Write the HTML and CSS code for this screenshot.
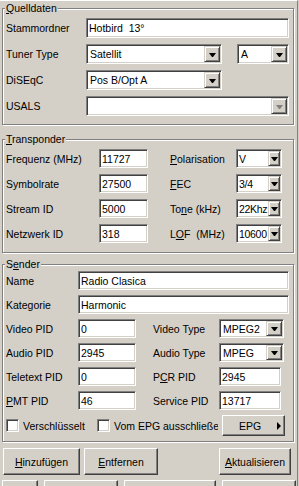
FILE: index.html
```html
<!DOCTYPE html>
<html lang="de">
<head>
    <meta charset="UTF-8">
    <title>Sender bearbeiten</title>
    <link rel="stylesheet" href="styles.css">
</head>
<body>
<div class="panel">
    <fieldset class="group">
        <legend><u>Q</u>uelldaten</legend>
        <div class="grid src">
            <label>Stammordner</label>
            <div class="field span">Hotbird&nbsp; 13°</div>

            <label>Tuner Type</label>
            <div class="combo"><span class="val">Satellit</span><span class="drop"></span></div>
            <div class="combo col4"><span class="val">A</span><span class="drop"></span></div>

            <label>DiSEqC</label>
            <div class="combo"><span class="val">Pos B/Opt A</span><span class="drop"></span></div>

            <label>USALS</label>
            <div class="combo span disabled"><span class="val"></span><span class="drop"></span></div>
        </div>
    </fieldset>

    <fieldset class="group tp">
        <legend><u>T</u>ransponder</legend>
        <div class="grid trans">
            <label>Frequenz (MHz)</label>
            <div class="field">11727</div>
            <label class="right"><u>P</u>olarisation</label>
            <div class="combo"><span class="val">V</span><span class="drop"></span></div>

            <label>Symbolrate</label>
            <div class="field">27500</div>
            <label class="right"><u>F</u>EC</label>
            <div class="combo"><span class="val">3/4</span><span class="drop"></span></div>

            <label>Stream ID</label>
            <div class="field">5000</div>
            <label class="right">To<u>n</u>e (kHz)</label>
            <div class="combo"><span class="val">22Khz</span><span class="drop"></span></div>

            <label>Netzwerk ID</label>
            <div class="field">318</div>
            <label class="right">L<u>O</u>F&nbsp; (MHz)</label>
            <div class="combo"><span class="val">10600</span><span class="drop"></span></div>
        </div>
    </fieldset>

    <fieldset class="group snd">
        <legend>S<u>e</u>nder</legend>
        <div class="grid sender">
            <label>Name</label>
            <div class="field span">Radio Clasica</div>

            <label>Kategorie</label>
            <div class="field span">Harmonic</div>

            <label>Video PID</label>
            <div class="field">0</div>
            <label class="right">Video Type</label>
            <div class="combo narrow"><span class="val">MPEG2</span><span class="drop"></span></div>

            <label>Audio PID</label>
            <div class="field">2945</div>
            <label class="right">Audio Type</label>
            <div class="combo narrow"><span class="val">MPEG</span><span class="drop"></span></div>

            <label>Teletext PID</label>
            <div class="field">0</div>
            <label class="right">P<u>C</u>R PID</label>
            <div class="field short">2945</div>

            <label><u>P</u>MT PID</label>
            <div class="field">46</div>
            <label class="right">Service PID</label>
            <div class="field short">13717</div>
        </div>
        <div class="checks">
            <div class="check first"><span class="box"></span>Verschlüsselt</div>
            <div class="check second"><span class="box"></span>Vom EPG ausschließen</div>
            <div class="btn epg">EPG<span class="arrow"></span></div>
        </div>
    </fieldset>

    <div class="actions">
        <div class="btn add"><span><u>H</u>inzufügen</span></div>
        <div class="btn remove"><span><u>E</u>ntfernen</span></div>
        <div class="btn update"><span><u>A</u>ktualisieren</span></div>
    </div>

    <div class="below">
        <div class="btn b1"></div>
        <div class="btn b2"></div>
        <div class="btn b3"></div>
        <div class="btn b4"></div>
    </div>
</div>
</body>
</html>
```

FILE: styles.css
```css
* {
    box-sizing: border-box;
}

body {
    margin: 0;
    background-color: #d4d0c8;
    font-family: "Liberation Sans", Arial, sans-serif;
    font-size: 10.5px;
    color: #000;
}

.panel {
    width: 298px;
    height: 486px;
    border-top: 1px solid #fff;
    border-right: 1px solid #808080;
    overflow: hidden;
}

/* group boxes */
.group {
    margin: 1px 3px 0 2px;
    padding: 3px 5px 8px 3px;
    border: 1px solid #808080;
    box-shadow: inset 1px 1px #fff, 1px 1px #fff;
    min-width: 0;
}

.group legend {
    padding: 0 1px;
    margin-left: -1px;
    line-height: 13px;
    background-color: #d4d0c8;
}

.tp {
    margin-top: 8px;
    padding-bottom: 9px;
}

.snd {
    margin-top: 5px;
    padding-top: 0;
    padding-bottom: 5px;
}

.grid {
    display: grid;
}

.grid label {
    grid-column: 1;
    align-self: center;
    white-space: nowrap;
}

.grid label.right {
    grid-column: 4;
}

.src {
    grid-template-columns: 80px 136px 15px 52px;
    grid-auto-rows: 20px;
    row-gap: 6px;
}

.src .col4 {
    grid-column: 4;
}

.span {
    grid-column: 2 / -1;
}

.trans {
    grid-template-columns: 93px 49px 22px 66px 46px;
    grid-auto-rows: 19px;
    row-gap: 6px;
}

.trans .drop {
    width: 12px;
}

.trans .combo .val {
    padding-left: 1px;
    letter-spacing: -0.3px;
}

.sender {
    grid-template-columns: 72px 58px 17px 66px 70px;
    grid-auto-rows: 19px;
    row-gap: 5px;
}

.sender .narrow {
    width: 65px;
}

.sender .short {
    width: 62px;
}

/* sunken edit fields */
.field,
.combo {
    background-color: #fff;
    border: 1px solid;
    border-color: #808080 #fff #fff #808080;
    box-shadow: inset 1px 1px #404040, inset -1px -1px #d4d0c8;
    white-space: nowrap;
    overflow: hidden;
}

.field {
    padding: 0 2px;
    display: flex;
    align-items: center;
}

.combo {
    display: flex;
    padding: 1px;
}

.combo .val {
    flex: 1;
    min-width: 0;
    overflow: hidden;
    padding-left: 2px;
    display: flex;
    align-items: center;
}

.drop {
    flex: none;
    width: 16px;
    background-color: #d4d0c8;
    border: 1px solid;
    border-color: #d4d0c8 #404040 #404040 #d4d0c8;
    box-shadow: inset 1px 1px #fff, inset -1px -1px #808080;
    display: flex;
    align-items: center;
    justify-content: center;
}

.drop::after {
    content: "";
    width: 1px;
    border-left: 3px solid transparent;
    border-right: 3px solid transparent;
    border-top: 4px solid #000;
    margin-top: 1px;
}

.disabled .drop::after {
    border-top-color: #808080;
}

/* checkboxes */
.checks {
    display: flex;
    align-items: center;
    height: 21px;
    margin-top: 5px;
}

.check {
    display: flex;
    align-items: center;
    gap: 4px;
    white-space: nowrap;
    overflow: hidden;
}

.check.first {
    width: 91px;
}

.check.second {
    width: 121px;
}

.box {
    flex: none;
    width: 13px;
    height: 13px;
    background-color: #fff;
    border: 1px solid;
    border-color: #808080 #fff #fff #808080;
    box-shadow: inset 1px 1px #404040, inset -1px -1px #d4d0c8;
}

/* raised buttons */
.btn {
    display: flex;
    align-items: center;
    justify-content: center;
    background-color: #d4d0c8;
    border: 1px solid;
    border-color: #fff #404040 #404040 #fff;
    box-shadow: inset -1px -1px #808080;
    white-space: nowrap;
}

.epg {
    margin-left: 4px;
    width: 63px;
    height: 21px;
    justify-content: flex-start;
    padding-left: 16px;
}

.arrow {
    border-left: 4px solid #000;
    border-top: 4px solid transparent;
    border-bottom: 4px solid transparent;
    margin-left: 16px;
}

.actions {
    display: flex;
    gap: 4px;
    margin-top: 6px;
    padding: 0 6px 0 3px;
    height: 27px;
}

.add {
    width: 77px;
}

.remove {
    width: 74px;
}

.update {
    margin-left: auto;
    width: 72px;
}

.below {
    display: flex;
    gap: 6px;
    margin-top: 5px;
    padding-left: 2px;
    height: 24px;
}

.below .b1 {
    width: 36px;
}

.below .b2 {
    width: 74px;
}

.below .b3 {
    width: 92px;
}

.below .b4 {
    width: 74px;
}
```
